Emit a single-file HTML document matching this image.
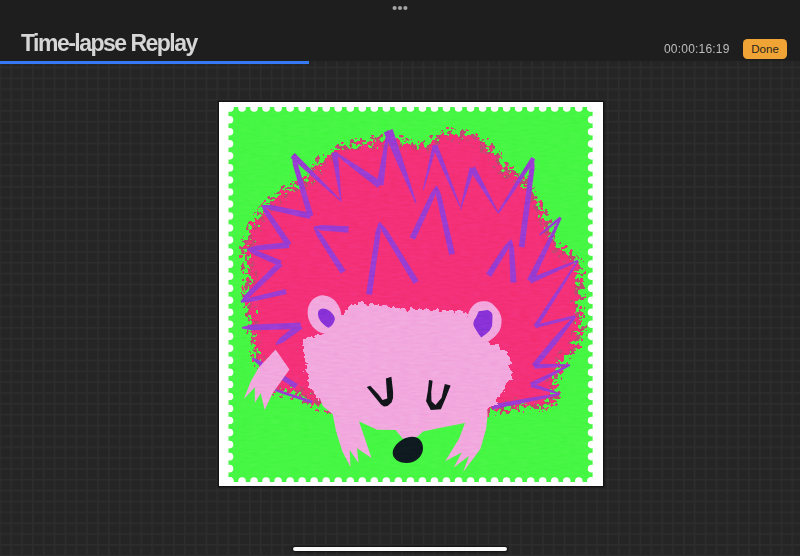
<!DOCTYPE html>
<html><head><meta charset="utf-8"><style>
html,body{margin:0;padding:0;width:800px;height:556px;overflow:hidden;background:#252525;}
body{position:relative;font-family:"Liberation Sans",sans-serif;}
.grid{position:absolute;left:0;top:0;width:800px;height:556px;
background-color:#252525;}
.hdr{position:absolute;left:0;top:0;width:800px;height:61px;background:#1e1e1e;}
.bar{position:absolute;left:0;top:61px;width:309px;height:3px;background:#3579f5;}
.title{position:absolute;left:21px;top:30px;font-size:23px;font-weight:bold;color:#d6d6d6;letter-spacing:-1.52px;white-space:nowrap;}
.time{position:absolute;left:664px;top:42px;font-size:12px;color:#bdbdbd;white-space:nowrap;letter-spacing:0.2px;}
.done{position:absolute;left:743px;top:39px;width:44px;height:19.5px;border-radius:4.5px;background:#f0a436;color:#2a251c;font-size:11.6px;text-align:center;line-height:19.5px;}
.dots{position:absolute;left:0;top:0;}
.home{position:absolute;left:293px;top:547px;width:214px;height:4px;border-radius:2px;background:#fafafa;box-shadow:0 0 2px 1px rgba(0,0,0,0.6);}
svg{position:absolute;left:0;top:0;}
</style></head><body>
<div class="grid"></div>
<svg width="800" height="556" viewBox="0 0 800 556">
<defs>
<pattern id="gp" x="10.35" y="66.65" width="10.85" height="10.85" patternUnits="userSpaceOnUse">
<rect x="0" y="0" width="1.5" height="10.85" fill="#2d2d2d"/>
<rect x="0" y="0" width="10.85" height="1.5" fill="#2d2d2d"/>
</pattern>
<filter id="rough" x="-8%" y="-8%" width="116%" height="116%" color-interpolation-filters="sRGB">
<feTurbulence type="fractalNoise" baseFrequency="0.03" numOctaves="2" seed="2" result="lowN"/>
<feDisplacementMap in="SourceGraphic" in2="lowN" scale="10" xChannelSelector="R" yChannelSelector="G" result="disp"/>
<feGaussianBlur in="disp" stdDeviation="5.5" result="blur"/>
<feTurbulence type="fractalNoise" baseFrequency="0.2" numOctaves="2" seed="7" result="hiN"/>
<feComposite in="blur" in2="hiN" operator="arithmetic" k1="0" k2="1" k3="2.4" k4="-1.2" result="mix"/>
<feComponentTransfer in="mix" result="th"><feFuncA type="discrete" tableValues="0 1"/></feComponentTransfer>
<feComponentTransfer in="blur" result="om"><feFuncA type="discrete" tableValues="0 1 1 1 1 1 1 1 1 1 1 1 1 1 1 1 1 1 1 1"/></feComponentTransfer>
<feComponentTransfer in="blur" result="im"><feFuncA type="discrete" tableValues="0 0 0 0 0 0 0 0 0 1"/></feComponentTransfer>
<feComposite in="th" in2="om" operator="in" result="th2"/>
<feMerge result="mask"><feMergeNode in="th2"/><feMergeNode in="im"/></feMerge>
<feFlood flood-color="#f43078"/>
<feComposite in2="mask" operator="in"/>
</filter>
<filter id="roughdark" x="-8%" y="-8%" width="116%" height="116%" color-interpolation-filters="sRGB">
<feTurbulence type="fractalNoise" baseFrequency="0.03" numOctaves="2" seed="2" result="lowN"/>
<feDisplacementMap in="SourceGraphic" in2="lowN" scale="10" xChannelSelector="R" yChannelSelector="G" result="disp"/>
<feGaussianBlur in="disp" stdDeviation="5.5" result="blur"/>
<feTurbulence type="fractalNoise" baseFrequency="0.2" numOctaves="2" seed="13" result="hiN"/>
<feComposite in="blur" in2="hiN" operator="arithmetic" k1="0" k2="1" k3="2.4" k4="-1.08" result="mix"/>
<feComponentTransfer in="mix" result="th"><feFuncA type="discrete" tableValues="0 1"/></feComponentTransfer>
<feComponentTransfer in="blur" result="om"><feFuncA type="discrete" tableValues="0 1 1 1 1 1 1 1 1 1 1 1 1 1 1 1 1 1 1 1"/></feComponentTransfer>
<feComponentTransfer in="blur" result="im"><feFuncA type="discrete" tableValues="0 0 0 0 0 0 0 0 0 1"/></feComponentTransfer>
<feComposite in="th" in2="om" operator="in" result="th2"/>
<feMerge result="mask"><feMergeNode in="th2"/><feMergeNode in="im"/></feMerge>
<feFlood flood-color="#c04a70"/>
<feComposite in2="mask" operator="in"/>
</filter>
<filter id="rough2" x="-8%" y="-8%" width="116%" height="116%" color-interpolation-filters="sRGB">
<feTurbulence type="fractalNoise" baseFrequency="0.07" numOctaves="2" seed="4" result="lowN"/>
<feDisplacementMap in="SourceGraphic" in2="lowN" scale="9" xChannelSelector="R" yChannelSelector="G" result="disp"/>
<feGaussianBlur in="disp" stdDeviation="2" result="blur"/>
<feTurbulence type="fractalNoise" baseFrequency="0.2" numOctaves="2" seed="9" result="hiN"/>
<feComposite in="blur" in2="hiN" operator="arithmetic" k1="0" k2="1" k3="1.5" k4="-0.75" result="mix"/>
<feComponentTransfer in="mix" result="th"><feFuncA type="discrete" tableValues="0 1"/></feComponentTransfer>
<feComponentTransfer in="blur" result="om"><feFuncA type="discrete" tableValues="0 1 1 1 1 1 1 1 1 1"/></feComponentTransfer>
<feComponentTransfer in="blur" result="im"><feFuncA type="discrete" tableValues="0 0 0 0 0 0 0 0 0 1"/></feComponentTransfer>
<feComposite in="th" in2="om" operator="in" result="th2"/>
<feMerge result="mask"><feMergeNode in="th2"/><feMergeNode in="im"/></feMerge>
<feFlood flood-color="#f2a8de"/>
<feComposite in2="mask" operator="in"/>
</filter>
<filter id="tex" x="0" y="0" width="100%" height="100%" color-interpolation-filters="sRGB">
<feTurbulence type="fractalNoise" baseFrequency="0.1 0.45" numOctaves="3" seed="11"/>
<feColorMatrix type="matrix" values="0.33 0.33 0.33 0 0  0.33 0.33 0.33 0 0  0.33 0.33 0.33 0 0  0 0 0 0 1"/>
</filter>
<clipPath id="stampclip"><rect x="228" y="106" width="365" height="377"/></clipPath>
</defs>
<rect x="0" y="61" width="800" height="495" fill="url(#gp)"/>
<rect x="217.5" y="100.5" width="387" height="387" fill="#141414"/>
<rect x="219" y="102" width="384" height="384" fill="#ffffff"/>
<rect x="228.5" y="107" width="364.1" height="375" fill="#46f743"/>
<g fill="#ffffff"><circle cx="230.00" cy="108.00" r="3.8"/><circle cx="230.00" cy="481.00" r="3.8"/><circle cx="242.03" cy="108.00" r="3.8"/><circle cx="242.03" cy="481.00" r="3.8"/><circle cx="254.05" cy="108.00" r="3.8"/><circle cx="254.05" cy="481.00" r="3.8"/><circle cx="266.08" cy="108.00" r="3.8"/><circle cx="266.08" cy="481.00" r="3.8"/><circle cx="278.11" cy="108.00" r="3.8"/><circle cx="278.11" cy="481.00" r="3.8"/><circle cx="290.13" cy="108.00" r="3.8"/><circle cx="290.13" cy="481.00" r="3.8"/><circle cx="302.16" cy="108.00" r="3.8"/><circle cx="302.16" cy="481.00" r="3.8"/><circle cx="314.19" cy="108.00" r="3.8"/><circle cx="314.19" cy="481.00" r="3.8"/><circle cx="326.21" cy="108.00" r="3.8"/><circle cx="326.21" cy="481.00" r="3.8"/><circle cx="338.24" cy="108.00" r="3.8"/><circle cx="338.24" cy="481.00" r="3.8"/><circle cx="350.27" cy="108.00" r="3.8"/><circle cx="350.27" cy="481.00" r="3.8"/><circle cx="362.29" cy="108.00" r="3.8"/><circle cx="362.29" cy="481.00" r="3.8"/><circle cx="374.32" cy="108.00" r="3.8"/><circle cx="374.32" cy="481.00" r="3.8"/><circle cx="386.35" cy="108.00" r="3.8"/><circle cx="386.35" cy="481.00" r="3.8"/><circle cx="398.37" cy="108.00" r="3.8"/><circle cx="398.37" cy="481.00" r="3.8"/><circle cx="410.40" cy="108.00" r="3.8"/><circle cx="410.40" cy="481.00" r="3.8"/><circle cx="422.43" cy="108.00" r="3.8"/><circle cx="422.43" cy="481.00" r="3.8"/><circle cx="434.45" cy="108.00" r="3.8"/><circle cx="434.45" cy="481.00" r="3.8"/><circle cx="446.48" cy="108.00" r="3.8"/><circle cx="446.48" cy="481.00" r="3.8"/><circle cx="458.51" cy="108.00" r="3.8"/><circle cx="458.51" cy="481.00" r="3.8"/><circle cx="470.53" cy="108.00" r="3.8"/><circle cx="470.53" cy="481.00" r="3.8"/><circle cx="482.56" cy="108.00" r="3.8"/><circle cx="482.56" cy="481.00" r="3.8"/><circle cx="494.59" cy="108.00" r="3.8"/><circle cx="494.59" cy="481.00" r="3.8"/><circle cx="506.61" cy="108.00" r="3.8"/><circle cx="506.61" cy="481.00" r="3.8"/><circle cx="518.64" cy="108.00" r="3.8"/><circle cx="518.64" cy="481.00" r="3.8"/><circle cx="530.67" cy="108.00" r="3.8"/><circle cx="530.67" cy="481.00" r="3.8"/><circle cx="542.69" cy="108.00" r="3.8"/><circle cx="542.69" cy="481.00" r="3.8"/><circle cx="554.72" cy="108.00" r="3.8"/><circle cx="554.72" cy="481.00" r="3.8"/><circle cx="566.75" cy="108.00" r="3.8"/><circle cx="566.75" cy="481.00" r="3.8"/><circle cx="578.77" cy="108.00" r="3.8"/><circle cx="578.77" cy="481.00" r="3.8"/><circle cx="590.80" cy="108.00" r="3.8"/><circle cx="590.80" cy="481.00" r="3.8"/><circle cx="229.50" cy="107.75" r="3.8"/><circle cx="591.60" cy="107.75" r="3.8"/><circle cx="229.50" cy="119.78" r="3.8"/><circle cx="591.60" cy="119.78" r="3.8"/><circle cx="229.50" cy="131.81" r="3.8"/><circle cx="591.60" cy="131.81" r="3.8"/><circle cx="229.50" cy="143.84" r="3.8"/><circle cx="591.60" cy="143.84" r="3.8"/><circle cx="229.50" cy="155.87" r="3.8"/><circle cx="591.60" cy="155.87" r="3.8"/><circle cx="229.50" cy="167.90" r="3.8"/><circle cx="591.60" cy="167.90" r="3.8"/><circle cx="229.50" cy="179.93" r="3.8"/><circle cx="591.60" cy="179.93" r="3.8"/><circle cx="229.50" cy="191.96" r="3.8"/><circle cx="591.60" cy="191.96" r="3.8"/><circle cx="229.50" cy="204.00" r="3.8"/><circle cx="591.60" cy="204.00" r="3.8"/><circle cx="229.50" cy="216.03" r="3.8"/><circle cx="591.60" cy="216.03" r="3.8"/><circle cx="229.50" cy="228.06" r="3.8"/><circle cx="591.60" cy="228.06" r="3.8"/><circle cx="229.50" cy="240.09" r="3.8"/><circle cx="591.60" cy="240.09" r="3.8"/><circle cx="229.50" cy="252.12" r="3.8"/><circle cx="591.60" cy="252.12" r="3.8"/><circle cx="229.50" cy="264.15" r="3.8"/><circle cx="591.60" cy="264.15" r="3.8"/><circle cx="229.50" cy="276.18" r="3.8"/><circle cx="591.60" cy="276.18" r="3.8"/><circle cx="229.50" cy="288.21" r="3.8"/><circle cx="591.60" cy="288.21" r="3.8"/><circle cx="229.50" cy="300.24" r="3.8"/><circle cx="591.60" cy="300.24" r="3.8"/><circle cx="229.50" cy="312.27" r="3.8"/><circle cx="591.60" cy="312.27" r="3.8"/><circle cx="229.50" cy="324.30" r="3.8"/><circle cx="591.60" cy="324.30" r="3.8"/><circle cx="229.50" cy="336.33" r="3.8"/><circle cx="591.60" cy="336.33" r="3.8"/><circle cx="229.50" cy="348.36" r="3.8"/><circle cx="591.60" cy="348.36" r="3.8"/><circle cx="229.50" cy="360.39" r="3.8"/><circle cx="591.60" cy="360.39" r="3.8"/><circle cx="229.50" cy="372.42" r="3.8"/><circle cx="591.60" cy="372.42" r="3.8"/><circle cx="229.50" cy="384.45" r="3.8"/><circle cx="591.60" cy="384.45" r="3.8"/><circle cx="229.50" cy="396.49" r="3.8"/><circle cx="591.60" cy="396.49" r="3.8"/><circle cx="229.50" cy="408.52" r="3.8"/><circle cx="591.60" cy="408.52" r="3.8"/><circle cx="229.50" cy="420.55" r="3.8"/><circle cx="591.60" cy="420.55" r="3.8"/><circle cx="229.50" cy="432.58" r="3.8"/><circle cx="591.60" cy="432.58" r="3.8"/><circle cx="229.50" cy="444.61" r="3.8"/><circle cx="591.60" cy="444.61" r="3.8"/><circle cx="229.50" cy="456.64" r="3.8"/><circle cx="591.60" cy="456.64" r="3.8"/><circle cx="229.50" cy="468.67" r="3.8"/><circle cx="591.60" cy="468.67" r="3.8"/><circle cx="229.50" cy="480.70" r="3.8"/><circle cx="591.60" cy="480.70" r="3.8"/></g>
<g>
<path d="M246.0 251.0 L257.0 225.0 L272.0 202.0 L298.0 188.0 L323.0 164.5 L345.0 147.5 L367.5 143.7 L382.5 140.0 L400.0 142.5 L417.5 147.5 L432.5 145.0 L445.0 135.0 L462.5 136.0 L480.0 143.0 L492.7 155.5 L502.8 170.5 L518.0 175.5 L530.5 195.7 L542.0 214.6 L548.5 229.0 L553.4 247.0 L564.7 253.4 L577.7 261.5 L579.0 281.0 L578.4 308.0 L578.4 333.0 L575.0 345.0 L560.7 355.0 L550.7 385.0 L553.0 398.0 L530.5 405.0 L500.3 406.0 L420.0 420.0 L318.0 403.0 L294.4 391.2 L274.6 387.2 L257.0 355.5 L255.0 333.3 L250.0 308.0 L251.0 283.0 Z" fill="#f43078" filter="url(#roughdark)"/>
<path d="M246.0 251.0 L257.0 225.0 L272.0 202.0 L298.0 188.0 L323.0 164.5 L345.0 147.5 L367.5 143.7 L382.5 140.0 L400.0 142.5 L417.5 147.5 L432.5 145.0 L445.0 135.0 L462.5 136.0 L480.0 143.0 L492.7 155.5 L502.8 170.5 L518.0 175.5 L530.5 195.7 L542.0 214.6 L548.5 229.0 L553.4 247.0 L564.7 253.4 L577.7 261.5 L579.0 281.0 L578.4 308.0 L578.4 333.0 L575.0 345.0 L560.7 355.0 L550.7 385.0 L553.0 398.0 L530.5 405.0 L500.3 406.0 L420.0 420.0 L318.0 403.0 L294.4 391.2 L274.6 387.2 L257.0 355.5 L255.0 333.3 L250.0 308.0 L251.0 283.0 Z" fill="#f43078" filter="url(#rough)"/>
<g fill="#9a3cd2"><path d="M292.0 155.5 L292.8 164.6 L307.7 216.8 L313.3 215.2 L297.6 163.2 L293.4 155.1 Z"/><path d="M261.9 206.4 L270.4 210.0 L309.9 218.9 L311.1 213.1 L271.4 205.1 L262.3 205.0 Z"/><path d="M261.5 206.1 L265.1 214.5 L286.6 246.7 L291.4 243.3 L269.3 211.7 L262.7 205.3 Z"/><path d="M247.6 249.7 L256.7 250.6 L289.3 247.9 L288.7 242.1 L256.2 245.6 L247.4 248.3 Z"/><path d="M247.2 249.7 L253.7 254.5 L279.3 266.2 L281.7 260.8 L255.8 249.9 L247.8 248.3 Z"/><path d="M241.5 302.5 L249.2 297.5 L282.6 265.6 L278.4 261.4 L245.7 293.9 L240.5 301.5 Z"/><path d="M241.2 302.7 L250.3 302.1 L286.6 294.0 L285.4 289.0 L249.3 297.8 L240.8 301.3 Z"/><path d="M290.6 157.5 L315.5 179.5 L340.7 201.4 L341.3 200.6 L318.2 176.8 L294.8 153.1 Z"/><path d="M331.7 152.9 L335.9 177.0 L340.5 201.1 L341.5 200.9 L339.8 176.5 L337.7 152.1 Z"/><path d="M334.1 153.3 L355.8 170.9 L377.8 188.0 L382.2 182.0 L358.9 166.6 L335.3 151.7 Z"/><path d="M387.2 130.6 L381.7 157.5 L376.5 184.5 L383.5 185.5 L386.5 158.2 L389.2 130.8 Z"/><path d="M383.8 132.4 L399.4 167.9 L415.5 203.2 L416.5 202.8 L404.8 165.8 L392.6 129.0 Z"/><path d="M432.8 144.7 L427.7 167.2 L422.8 189.7 L423.8 189.9 L430.3 167.8 L436.6 145.7 Z"/><path d="M432.2 146.2 L445.6 176.3 L459.3 206.2 L460.3 205.8 L448.9 174.9 L437.2 144.2 Z"/><path d="M469.7 167.3 L464.7 188.3 L459.9 209.3 L460.9 209.5 L467.8 189.1 L474.5 168.7 Z"/><path d="M469.3 169.6 L483.4 191.5 L497.8 213.3 L498.6 212.7 L486.9 189.5 L474.9 166.4 Z"/><path d="M499.0 213.5 L517.3 186.5 L535.2 159.3 L531.4 156.9 L514.2 184.6 L497.4 212.5 Z"/><path d="M532.6 158.0 L529.6 166.7 L518.7 246.8 L524.5 247.6 L534.6 167.4 L534.0 158.2 Z"/><path d="M314.0 227.9 L321.5 230.5 L348.3 232.8 L348.7 226.2 L321.9 224.9 L314.2 226.5 Z"/><path d="M313.5 227.6 L316.9 236.1 L340.6 273.6 L345.6 270.4 L321.1 233.4 L314.7 226.8 Z"/><path d="M378.8 222.5 L375.7 231.1 L366.1 294.1 L371.9 294.9 L380.7 231.9 L380.2 222.7 Z"/><path d="M378.9 223.0 L382.1 231.6 L413.7 283.9 L418.7 280.7 L386.4 228.9 L380.1 222.2 Z"/><path d="M436.0 186.1 L430.6 193.5 L409.7 237.2 L415.1 239.8 L435.2 195.6 L437.4 186.7 Z"/><path d="M436.0 186.6 L436.2 195.7 L449.1 255.0 L454.9 253.6 L441.1 194.6 L437.4 186.2 Z"/><path d="M510.5 239.4 L504.2 246.0 L486.0 273.8 L491.0 277.0 L508.4 248.7 L511.7 240.2 Z"/><path d="M510.4 239.8 L509.1 248.9 L510.5 282.7 L516.5 282.3 L514.1 248.6 L511.8 239.8 Z"/><path d="M540.1 235.4 L550.9 227.3 L561.6 219.0 L559.8 216.6 L549.4 225.3 L539.1 234.2 Z"/><path d="M559.8 217.4 L543.2 248.4 L527.1 279.6 L532.9 282.4 L547.5 250.4 L561.6 218.2 Z"/><path d="M531.1 283.5 L554.8 272.5 L578.3 261.2 L577.7 259.8 L553.2 269.0 L528.9 278.5 Z"/><path d="M577.4 260.1 L555.3 292.7 L533.5 325.4 L537.3 327.8 L558.1 294.4 L578.6 260.9 Z"/><path d="M535.8 328.1 L555.6 323.0 L575.3 317.7 L574.7 315.3 L554.8 320.1 L535.0 325.1 Z"/><path d="M574.0 315.7 L552.3 339.6 L531.9 364.6 L536.1 368.0 L556.7 343.2 L576.0 317.3 Z"/><path d="M534.1 368.8 L552.1 367.4 L570.0 365.7 L570.0 364.3 L551.9 363.9 L533.9 363.8 Z"/><path d="M569.7 364.3 L549.7 373.4 L529.9 382.8 L532.1 387.2 L551.3 376.6 L570.3 365.7 Z"/><path d="M530.4 386.9 L545.1 390.9 L559.8 394.7 L560.2 393.3 L545.9 388.1 L531.6 383.1 Z"/><path d="M559.8 393.0 L525.6 398.6 L491.5 404.5 L492.5 409.5 L526.4 402.4 L560.2 395.0 Z"/><path d="M241.9 328.5 L251.0 330.3 L300.6 329.1 L300.4 322.5 L250.8 324.7 L241.9 327.1 Z"/><path d="M276.5 345.1 L283.1 342.6 L302.5 328.4 L298.5 323.2 L279.7 338.1 L275.5 343.9 Z"/><path d="M251.6 358.6 L258.4 364.7 L295.0 388.4 L297.8 384.0 L260.8 361.0 L252.4 357.4 Z"/><path d="M272.4 389.9 L280.8 393.2 L311.7 403.5 L312.7 400.7 L281.5 390.8 L272.8 388.5 Z"/></g>
<path d="M275.6 349.6 L289.5 369.4 L272.6 393.2 L264.7 410.0 L260.7 393.2 L254.8 403.0 L254.8 387.2 L243.9 399.1 L250.8 381.3 L258.8 367.4 Z" fill="#f2a8de"/>
<path d="M300.3 339.7 L319.0 336.0 L340.0 316.0 L353.0 306.0 L365.0 304.5 L376.0 306.0 L390.0 309.0 L410.0 309.0 L430.0 311.0 L450.0 310.0 L465.0 313.0 L487.8 341.2 L508.3 354.8 L513.4 375.3 L501.4 392.4 L494.6 406.0 L480.0 412.0 L420.0 415.0 L330.0 410.0 L320.1 399.1 L308.3 385.2 L304.3 361.5 Z" fill="#f2a8de" filter="url(#rough2)"/>
<path d="M322.0 352.0 L345.0 326.0 L365.0 317.0 L410.0 318.0 L460.0 322.0 L480.0 347.0 L498.0 362.0 L503.0 377.0 L493.0 392.0 L487.0 406.0 L487.6 414.4 L486.2 428.8 L480.4 448.9 L463.2 472.0 L468.9 456.1 L453.8 467.6 L461.7 452.5 L445.2 461.2 L459.4 438.1 L465.0 423.1 L440.6 427.8 L423.0 431.5 L417.4 436.7 L402.8 438.8 L395.5 429.9 L376.9 429.7 L359.0 421.3 L371.5 458.0 L357.0 448.3 L358.6 462.9 L349.7 450.0 L350.5 466.9 L342.4 451.5 L336.0 431.0 L332.7 414.3 L323.0 406.2 L320.1 399.1 L314.0 385.0 L312.0 362.0 Z" fill="#f2a8de"/>
<ellipse cx="324.5" cy="314.5" rx="16.5" ry="19.5" transform="rotate(-20 324.5 314.5)" fill="#f2a8de"/>
<path d="M318.2 311.5 C319.5 308.5 323 307.8 326 309 C330 310.5 334 314 334.8 318.5 C335.2 322 331 327 328.3 327.8 C325 326 321 322.5 319 318.5 C318 316 317.7 313.5 318.2 311.5 Z" fill="#8a32d8"/>
<path d="M474.8 303.9 C478 301.5 481 301.2 484.7 301.2 C488.5 301.3 491 302.5 493.6 304.9 C498 309 501 313.5 501.5 318.5 C502 325 500.5 330 497.6 333.6 C494.5 337.5 491 340 487.7 342 L470 338 C467 332 466.5 320 467.9 314.8 C469 310.5 471.5 306.5 474.8 303.9 Z" fill="#f2a8de"/>
<path d="M478.8 311.3 L487.7 309.9 C490.5 311 492.5 313 492.6 315.8 L492.1 325.7 C491 329 489 331.5 486.7 333.6 L481.2 337.6 C478 333 474.5 328.5 473.3 324.2 C473.5 321.5 474.5 319.5 475.8 317.8 Z" fill="#8a32d8"/>
<path d="M366.8 387.0 L370.2 385.8 L378.5 394.5 L382.5 400.0 L387.3 398.6 L385.9 378.5 L391.4 376.8 L393.1 392.0 L393.0 398.0 L391.5 402.5 L387.5 406.0 L384.0 406.6 L381.0 404.5 L374.5 396.5 Z" fill="#111418"/>
<path d="M429.0 380.1 L432.6 380.8 L431.2 392.0 L431.5 401.3 L435.5 405.0 L441.6 397.7 L444.8 384.1 L450.6 385.5 L445.2 399.2 L440.9 409.3 L430.8 410.0 L426.1 401.3 L427.9 390.5 Z" fill="#111418"/>
<path d="M411.7 436.7 C420 436.5 423.5 443 423 449 C422.5 457 415 463 406.8 463 C398 463 392.5 458 392.7 453 C393 445 403 437 411.7 436.7 Z" fill="#0e1a20"/>
</g>
<rect x="228" y="106" width="365" height="377" filter="url(#tex)" opacity="0.2" style="mix-blend-mode:overlay"/>
</svg>
<div class="hdr"></div>
<div class="bar"></div>
<div class="title">Time-lapse Replay</div>
<div class="time">00:00:16:19</div>
<div class="done">Done</div>
<svg width="800" height="20" viewBox="0 0 800 20"><g fill="#a3a3a3"><circle cx="394.6" cy="8" r="2.1"/><circle cx="400" cy="8" r="2.1"/><circle cx="405.4" cy="8" r="2.1"/></g></svg>
<div class="home"></div>
</body></html>
